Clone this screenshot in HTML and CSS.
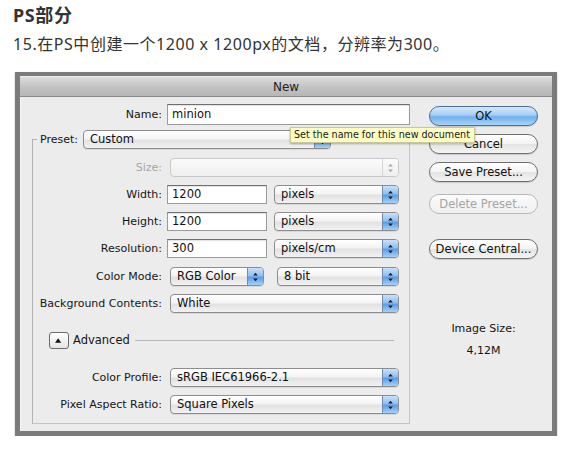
FILE: index.html
```html
<!DOCTYPE html>
<html>
<head>
<meta charset="utf-8">
<link rel="stylesheet" href="styles.css">
</head>
<body>
<div class="page">
  <h1 class="heading">PS部分</h1>
  <p class="intro">15.在PS中创建一个1200 x 1200px的文档，分辨率为300。</p>

  <div class="dialog">
    <div class="titlebar">New</div>
    <div class="content">
      <div class="form">
        <div class="name-row">
          <span class="label name-label">Name:</span>
          <div class="input name-input">minion</div>
        </div>

        <fieldset class="preset-box">
          <legend class="legend">
            <span class="label">Preset:</span>
            <div class="select preset-select"><span class="val">Custom</span><span class="arrow"><svg viewBox="0 0 16 18" width="16" height="18"><path d="M5.5 7.5 L8 4.5 L10.5 7.5 Z M5.5 10.5 L8 13.5 L10.5 10.5 Z" fill="#1b1b2a"/></svg></span></div>
          </legend>

          <div class="row">
            <span class="label row-label disabled">Size:</span>
            <div class="select sel-full disabled-select"><span class="val"></span><span class="arrow grey"><svg viewBox="0 0 16 18" width="16" height="18"><path d="M5.5 7.5 L8 4.5 L10.5 7.5 Z M5.5 10.5 L8 13.5 L10.5 10.5 Z" fill="#a9a9a9"/></svg></span></div>
          </div>

          <div class="row">
            <span class="label row-label">Width:</span>
            <div class="input num-input">1200</div>
            <div class="select unit-select"><span class="val">pixels</span><span class="arrow"><svg viewBox="0 0 16 18" width="16" height="18"><path d="M5.5 7.5 L8 4.5 L10.5 7.5 Z M5.5 10.5 L8 13.5 L10.5 10.5 Z" fill="#1b1b2a"/></svg></span></div>
          </div>

          <div class="row">
            <span class="label row-label">Height:</span>
            <div class="input num-input">1200</div>
            <div class="select unit-select"><span class="val">pixels</span><span class="arrow"><svg viewBox="0 0 16 18" width="16" height="18"><path d="M5.5 7.5 L8 4.5 L10.5 7.5 Z M5.5 10.5 L8 13.5 L10.5 10.5 Z" fill="#1b1b2a"/></svg></span></div>
          </div>

          <div class="row">
            <span class="label row-label">Resolution:</span>
            <div class="input num-input">300</div>
            <div class="select unit-select"><span class="val">pixels/cm</span><span class="arrow"><svg viewBox="0 0 16 18" width="16" height="18"><path d="M5.5 7.5 L8 4.5 L10.5 7.5 Z M5.5 10.5 L8 13.5 L10.5 10.5 Z" fill="#1b1b2a"/></svg></span></div>
          </div>

          <div class="row row-mode">
            <span class="label row-label">Color Mode:</span>
            <div class="select mode-select"><span class="val">RGB Color</span><span class="arrow"><svg viewBox="0 0 16 18" width="16" height="18"><path d="M5.5 7.5 L8 4.5 L10.5 7.5 Z M5.5 10.5 L8 13.5 L10.5 10.5 Z" fill="#1b1b2a"/></svg></span></div>
            <div class="select bit-select"><span class="val">8 bit</span><span class="arrow"><svg viewBox="0 0 16 18" width="16" height="18"><path d="M5.5 7.5 L8 4.5 L10.5 7.5 Z M5.5 10.5 L8 13.5 L10.5 10.5 Z" fill="#1b1b2a"/></svg></span></div>
          </div>

          <div class="row">
            <span class="label row-label">Background Contents:</span>
            <div class="select sel-full"><span class="val">White</span><span class="arrow"><svg viewBox="0 0 16 18" width="16" height="18"><path d="M5.5 7.5 L8 4.5 L10.5 7.5 Z M5.5 10.5 L8 13.5 L10.5 10.5 Z" fill="#1b1b2a"/></svg></span></div>
          </div>

          <div class="advanced-row">
            <span class="adv-btn"><svg viewBox="0 0 20 17" width="18" height="15"><path d="M5.5 11 L9 6 L12.5 11 Z" fill="#111"/></svg></span>
            <span class="label adv-label">Advanced</span>
            <span class="adv-line"></span>
          </div>

          <div class="row row-profile">
            <span class="label row-label">Color Profile:</span>
            <div class="select sel-full"><span class="val">sRGB IEC61966-2.1</span><span class="arrow"><svg viewBox="0 0 16 18" width="16" height="18"><path d="M5.5 7.5 L8 4.5 L10.5 7.5 Z M5.5 10.5 L8 13.5 L10.5 10.5 Z" fill="#1b1b2a"/></svg></span></div>
          </div>

          <div class="row row-aspect">
            <span class="label row-label">Pixel Aspect Ratio:</span>
            <div class="select sel-full"><span class="val">Square Pixels</span><span class="arrow"><svg viewBox="0 0 16 18" width="16" height="18"><path d="M5.5 7.5 L8 4.5 L10.5 7.5 Z M5.5 10.5 L8 13.5 L10.5 10.5 Z" fill="#1b1b2a"/></svg></span></div>
          </div>
        </fieldset>
      </div>

      <div class="side">
        <div class="btn btn-ok">OK</div>
        <div class="btn btn-cancel">Cancel</div>
        <div class="btn btn-save">Save Preset...</div>
        <div class="btn btn-delete">Delete Preset...</div>
        <div class="btn btn-device">Device Central...</div>
        <div class="size-title">Image Size:</div>
        <div class="size-value">4,12M</div>
      </div>
    </div>

    <div class="tooltip">Set the name for this new document</div>
  </div>
</div>
</body>
</html>
```

FILE: styles.css
```css
* { box-sizing: border-box; }

html, body {
  margin: 0;
  padding: 0;
  background: #ffffff;
}

.page {
  padding: 3px 0 0 13px;
  font-family: "Noto Sans", "Noto Sans CJK SC", sans-serif;
  color: #333333;
}

.heading {
  margin: 0;
  font-family: "Noto Sans", "Noto Sans CJK SC", sans-serif;
  font-size: 18px;
  line-height: 24px;
  font-weight: 700;
  letter-spacing: 0.6px;
  color: #333333;
}

.intro {
  margin: 6px 0 0 0;
  font-family: "Noto Sans", "Noto Sans CJK SC", sans-serif;
  font-size: 16px;
  line-height: 22px;
  letter-spacing: 0.55px;
  color: #333333;
}

/* Dialog */
.dialog {
  position: relative;
  margin: 17px 0 0 2px;
  width: 542px;
  height: 364px;
  border: 5px solid #7b7b7b;
  border-top-width: 4px;
  background: #ececec;
  font-family: "DejaVu Sans", sans-serif;
  font-size: 11px;
  color: #151515;
  box-shadow: 0 1px 2px rgba(0,0,0,0.25);
}

.titlebar {
  height: 21px;
  line-height: 21px;
  text-align: center;
  font-size: 12px;
  color: #222;
  background: linear-gradient(#dcdcdc, #c2c2c2 55%, #b6b6b6);
  border-bottom: 1px solid #8a8a8a;
  border-top: 1px solid #ededed;
}

.content {
  display: flex;
  height: 334px;
  border-left: 1px solid #f7f7f7;
}

.form {
  width: 394px;
  padding-top: 7px;
}

.label {
  line-height: 19px;
  white-space: nowrap;
}

.name-row {
  display: flex;
  align-items: center;
}

.name-label {
  width: 141px;
  text-align: right;
}

.input {
  height: 19px;
  background: #ffffff;
  border: 1px solid #9b9b9b;
  border-top-color: #6f6f6f;
  box-shadow: inset 0 1px 1px rgba(0,0,0,0.12);
  padding-left: 4px;
  line-height: 17px;
  font-size: 11.5px;
  color: #111;
}

.name-input {
  margin-left: 5px;
  width: 243px;
  height: 21px;
  line-height: 19px;
}

/* fieldset */
.preset-box {
  margin: 5px 0 0 11px;
  width: 378px;
  padding: 9px 0 9px 0;
  border: 1px solid #b3b3b3;
  border-right-color: #c4c4c4;
  border-bottom-color: #c4c4c4;
}

.legend {
  display: flex;
  align-items: center;
  margin-left: 4px;
  padding: 0 0 0 3px;
}

.preset-select {
  margin-left: 5px;
  width: 248px;
  height: 18px;
}

.row {
  display: flex;
  align-items: center;
  height: 19px;
  margin-bottom: 8px;
}

.row-mode {
  margin-top: 9px;
}

.row-label {
  width: 129px;
  text-align: right;
}

.disabled {
  color: #a6a6a6;
}

/* popup selects */
.select {
  display: flex;
  height: 19px;
  border: 1px solid #8d8d8d;
  border-radius: 4px;
  background: linear-gradient(#ffffff, #f4f4f4 45%, #e2e2e2 55%, #f2f2f2);
  overflow: hidden;
  box-shadow: 0 1px 0 rgba(0,0,0,0.08);
}

.select .val {
  flex: 1;
  padding-left: 6px;
  line-height: 17px;
  font-size: 11.5px;
  color: #111;
  white-space: nowrap;
}

.select .arrow {
  width: 16px;
  display: flex;
  align-items: center;
  justify-content: center;
  border-left: 1px solid #6d8cb4;
  background: linear-gradient(#c8e1fa, #8fc0f1 45%, #5a9fe6 55%, #a5d0f7);
}

.select .arrow svg {
  display: block;
}

.select .arrow.grey {
  border-left: 1px solid #d6d6d6;
  background: linear-gradient(#fbfbfb, #efefef);
}

.disabled-select {
  border-color: #c9c9c9;
  background: linear-gradient(#fbfbfb, #efefef);
  box-shadow: none;
}

.sel-full {
  margin-left: 8px;
  width: 229px;
}

.num-input {
  margin-left: 5px;
  width: 100px;
}

.unit-select {
  margin-left: 7px;
  width: 125px;
}

.mode-select {
  margin-left: 8px;
  width: 94px;
}

.bit-select {
  margin-left: 13px;
  width: 122px;
}

/* advanced */
.advanced-row {
  display: flex;
  align-items: center;
  height: 17px;
  margin-top: 19px;
  margin-bottom: 19px;
  padding-left: 16px;
}

.adv-btn {
  width: 20px;
  height: 17px;
  border: 1px solid #6a6a6a;
  border-radius: 3px;
  background: linear-gradient(#ffffff, #e4e4e4);
  display: flex;
  align-items: center;
  justify-content: center;
}

.adv-label {
  margin-left: 4px;
  font-size: 11.5px;
}

.adv-line {
  flex: 1;
  height: 1px;
  margin: 0 15px 0 5px;
  background: #b5b5b5;
}

.row-aspect {
  margin-bottom: 0;
}

/* side column */
.side {
  flex: 1;
  padding: 8px 0 0 14px;
  display: flex;
  flex-direction: column;
  align-items: flex-start;
}

.btn {
  width: 109px;
  height: 20px;
  border: 1px solid #6f6f6f;
  border-radius: 10px;
  background: linear-gradient(#ffffff, #f3f3f3 50%, #e3e3e3 52%, #f5f5f5);
  text-align: center;
  line-height: 18px;
  font-size: 11.5px;
  color: #111;
  box-shadow: 0 1px 1px rgba(0,0,0,0.15);
}

.btn-ok {
  margin-top: 1px;
  border-color: #4c6e99;
  background: linear-gradient(#d6eafd, #a3cdf6 45%, #6fb0ee 55%, #a8d4f8);
}

.btn-cancel { margin-top: 8px; }
.btn-save { margin-top: 8px; }

.btn-delete {
  margin-top: 12px;
  border-color: #b8b8b8;
  color: #a5a5a5;
  box-shadow: none;
  background: linear-gradient(#fbfbfb, #efefef);
}

.btn-device { margin-top: 25px; }

.size-title {
  width: 109px;
  text-align: center;
  margin-top: 63px;
}

.size-value {
  width: 109px;
  text-align: center;
  margin-top: 9px;
}

/* tooltip overlay */
.tooltip {
  position: absolute;
  left: 270px;
  top: 51px;
  width: 185px;
  height: 16px;
  padding-left: 3px;
  background: #fdfdc4;
  border: 1px solid #c8c89a;
  box-shadow: 0 1px 2px rgba(0,0,0,0.3);
  font-size: 9.6px;
  line-height: 14px;
  color: #1a1a1a;
  white-space: nowrap;
}
```
